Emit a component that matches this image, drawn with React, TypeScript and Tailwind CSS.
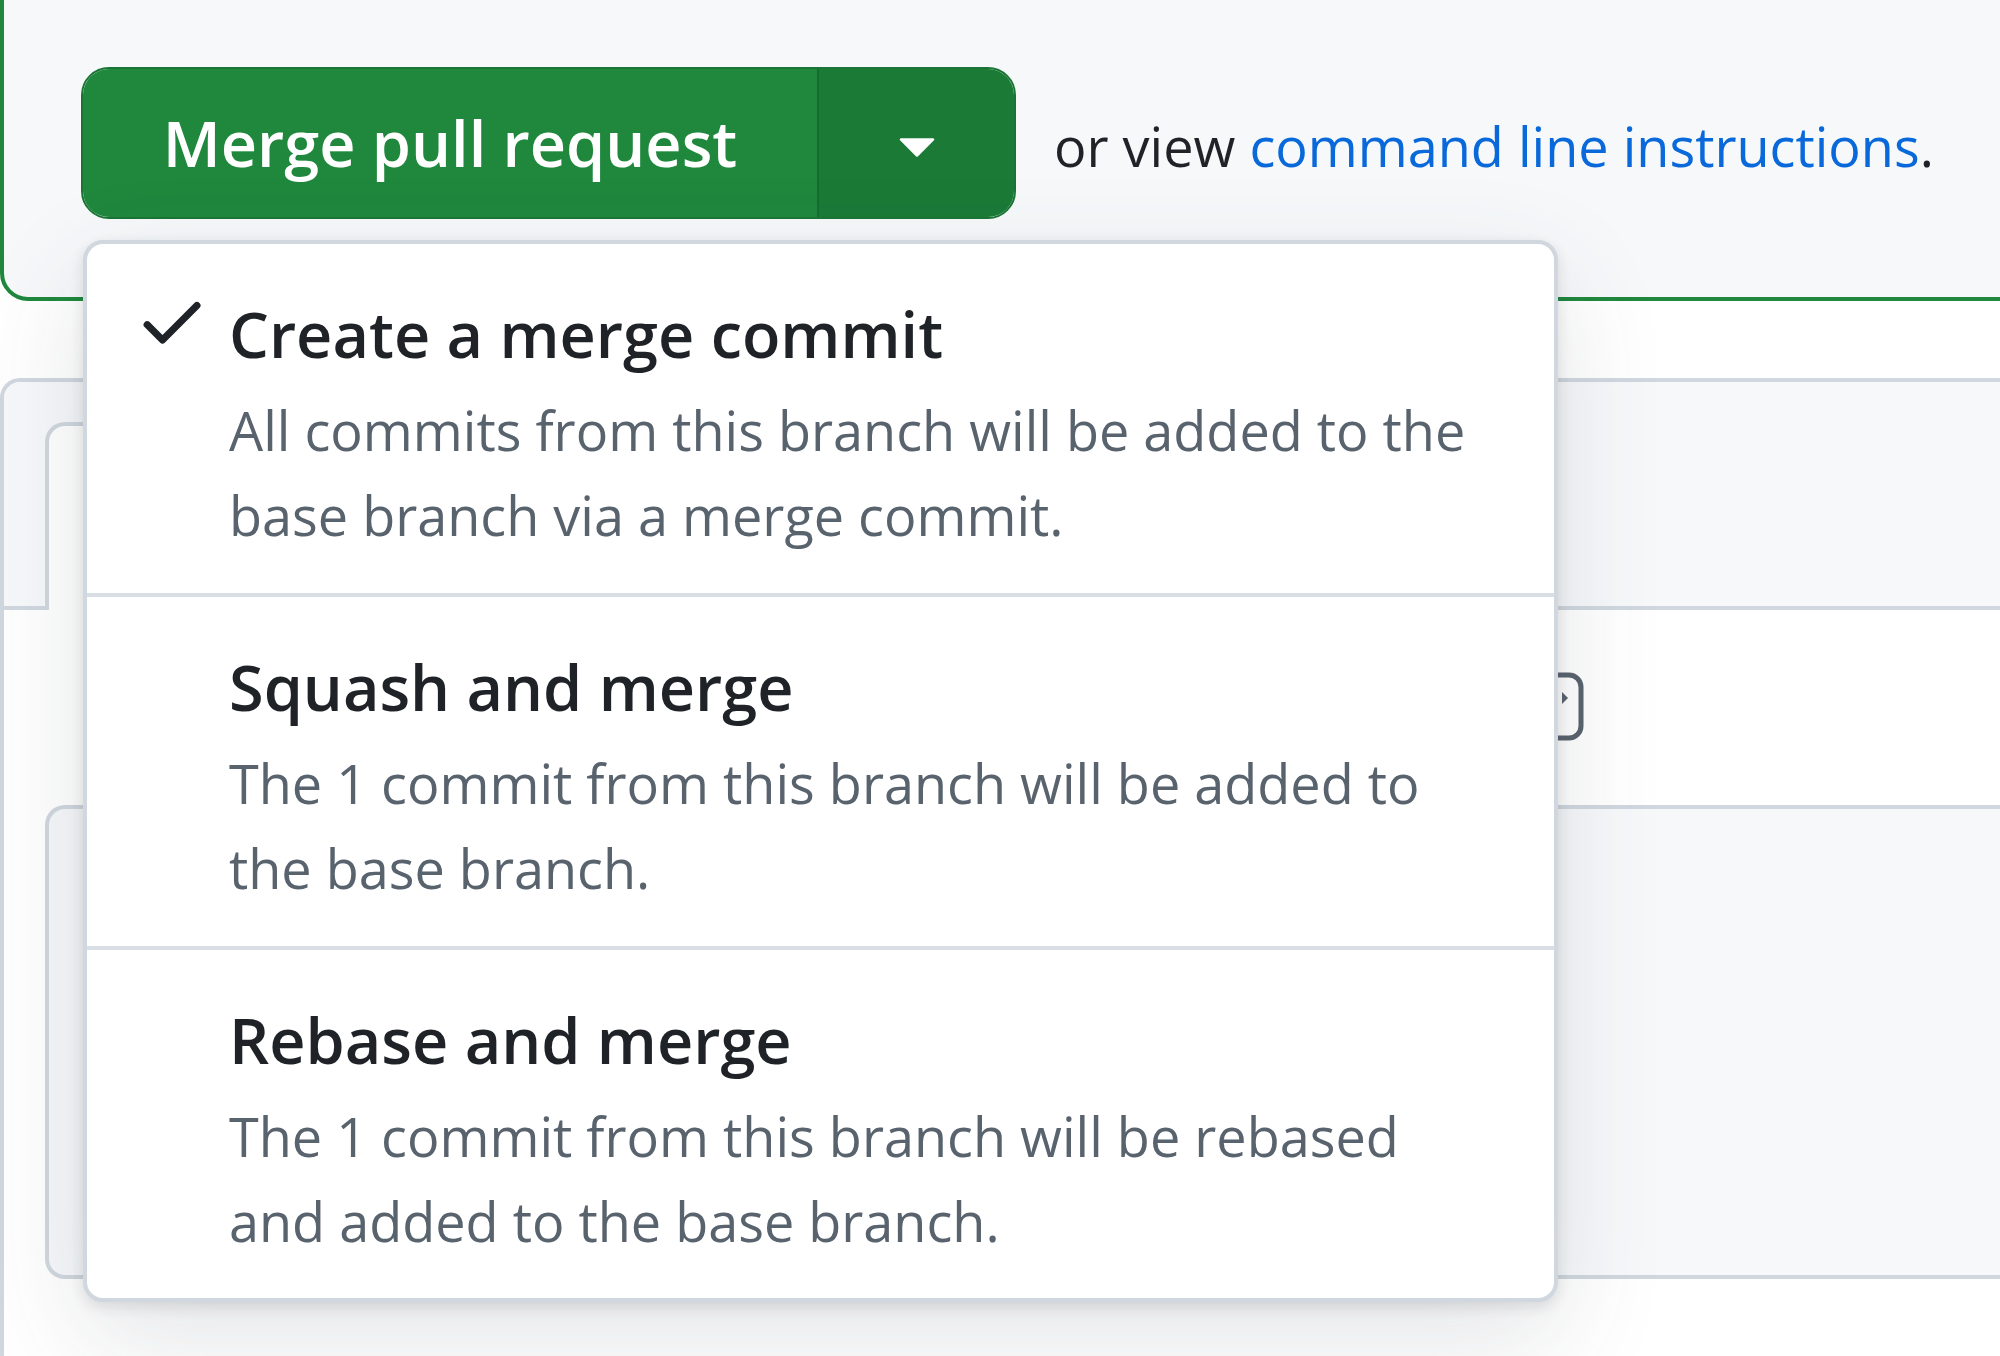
import React from 'react'

// ── Merge method options ──────────────────────────────────────────────────────

const METHODS: { title: string; lines: string[]; checked?: boolean; h: string }[] = [
  {
    title: 'Create a merge commit',
    lines: ['All commits from this branch will be added to the', 'base branch via a merge commit.'],
    checked: true,
    h: 'h-[353px] border-b-4',
  },
  {
    title: 'Squash and merge',
    lines: ['The 1 commit from this branch will be added to', 'the base branch.'],
    h: 'h-[353px] border-b-4',
  },
  {
    title: 'Rebase and merge',
    lines: ['The 1 commit from this branch will be rebased', 'and added to the base branch.'],
    h: 'h-[348px]',
  },
]

function CheckIcon() {
  return (
    <svg viewBox="0 0 16 16" className="w-[76px] h-[76px] -mt-[3px] ml-[47px]" fill="#1f2328">
      <path d="M13.78 4.22a.75.75 0 0 1 0 1.06l-7.25 7.25a.75.75 0 0 1-1.06 0L2.22 9.28a.751.751 0 0 1 .018-1.042.751.751 0 0 1 1.042-.018L6 10.94l6.72-6.72a.75.75 0 0 1 1.06 0Z" />
    </svg>
  )
}

function CaretDown() {
  return (
    <svg viewBox="0 0 16 16" className="w-[76px] h-[76px]" fill="#ffffff">
      <path d="m4.427 7.427 3.396 3.396a.25.25 0 0 0 .354 0l3.396-3.396A.25.25 0 0 0 11.396 7H4.604a.25.25 0 0 0-.177.427Z" />
    </svg>
  )
}

function MergeMenu() {
  return (
    <div className="absolute left-[83px] top-[240px] w-[1475px] h-[1062px] bg-white border-4 border-[#d0d7de] rounded-[20px] overflow-hidden shadow-[0_5px_14px_rgba(31,35,40,0.12),0_38px_110px_rgba(66,74,83,0.14)]">
      {METHODS.map(m => (
        <div key={m.title} className={`flex pt-[42px] border-[#d8dee4] ${m.h}`}>
          <div className="w-[142px] shrink-0">{m.checked && <CheckIcon />}</div>
          <div>
            <div className="text-[63px] leading-[95px] font-semibold text-[#1f2328] whitespace-nowrap">{m.title}</div>
            <div className="mt-[7px] text-[54px] leading-[85px] text-[#59636e] whitespace-nowrap">
              {m.lines.map(l => (
                <div key={l}>{l}</div>
              ))}
            </div>
          </div>
        </div>
      ))}
    </div>
  )
}

// ── Page ──────────────────────────────────────────────────────────────────────

export default function App() {
  return (
    <div className="relative w-[2000px] h-[1356px] overflow-hidden bg-white font-['Open_Sans',sans-serif]">

      {/* Merge box */}
      <div className="-mt-[30px] w-[2040px] h-[331px] border-4 border-[#1f883d] rounded-[28px] bg-[#f6f8fa] pl-[77px] pt-[93px]">
        <div className="flex items-center">
          <div className="flex shrink-0 h-[152px] rounded-[28px] overflow-hidden border-2 border-[#1a7534]">
            <div className="w-[734px] flex items-center justify-center bg-[#1f883d] text-white text-[63px] font-semibold">
              Merge pull request
            </div>
            <div className="w-[197px] flex items-center justify-center bg-[#1b7a36] border-l-2 border-[#176b30]">
              <CaretDown />
            </div>
          </div>
          <p className="ml-[38px] mt-[6px] text-[54px] text-[#1f2328] whitespace-nowrap">
            or view <span className="text-[#0969da]">command line instructions</span>.
          </p>
        </div>
      </div>

      {/* Comment form behind the menu */}
      <div className="mt-[77px] w-[2040px] pb-[200px] border-4 border-r-0 border-b-0 border-[#d0d7de] rounded-tl-[20px]">
        <div className="h-[228px] flex items-end bg-[#f6f8fa] border-b-4 border-[#d0d7de] pl-[41px] rounded-tl-[16px]">
          <div className="w-[700px] h-[188px] -mb-[4px] bg-white border-4 border-b-0 border-[#d0d7de] rounded-t-[20px]" />
        </div>
        <div className="h-[195px] pt-[62px] pl-[1518px]">
          <svg viewBox="0 0 62 69" className="w-[62px] h-[69px]" fill="none">
            <rect x="3" y="3" width="56" height="63" rx="12" stroke="#59636e" strokeWidth="5" />
            <path d="M40 20 l6 6 l-6 6 z" fill="#59636e" />
          </svg>
        </div>
        <div className="ml-[41px] h-[474px] bg-[#f6f8fa] border-4 border-r-0 border-[#d0d7de] rounded-l-[20px]" />
      </div>

      <MergeMenu />
    </div>
  )
}
